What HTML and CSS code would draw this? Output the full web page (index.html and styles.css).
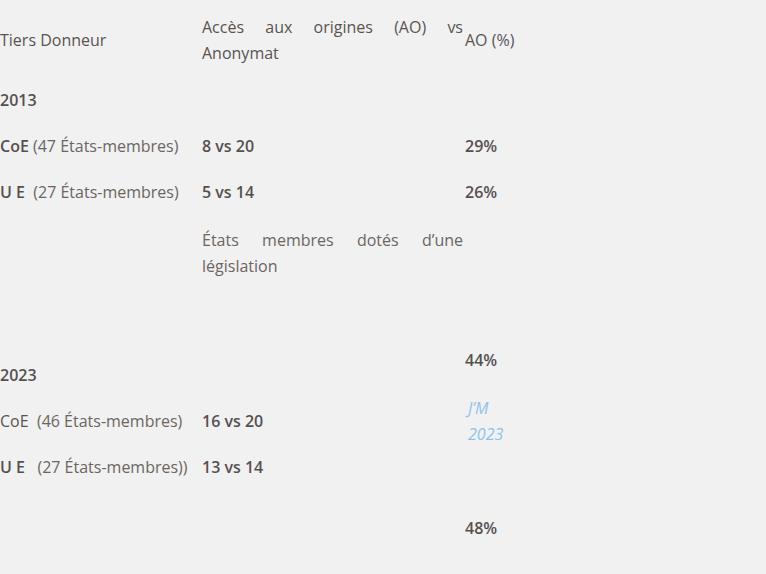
FILE: index.html
```html
<!DOCTYPE html>
<html lang="fr">
<head>
<meta charset="utf-8">
<link rel="stylesheet" href="styles.css">
</head>
<body>
<div class="table">
  <div class="row r-head">
    <div class="cell">Tiers Donneur</div>
    <div class="cell just">Accès aux origines (AO) vs Anonymat</div>
    <div class="cell">AO (%)</div>
  </div>
  <div class="row r-2013">
    <div class="cell strong">2013</div>
    <div class="cell"></div>
    <div class="cell"></div>
  </div>
  <div class="row r-coe">
    <div class="cell"><span class="strong">CoE</span> <span class="light">(47 États-membres)</span></div>
    <div class="cell strong">8 vs 20</div>
    <div class="cell strong">29%</div>
  </div>
  <div class="row r-ue">
    <div class="cell"><span class="strong">U E</span>&nbsp; <span class="light">(27 États-membres)</span></div>
    <div class="cell strong">5 vs 14</div>
    <div class="cell strong">26%</div>
  </div>
  <div class="row r-leg">
    <div class="cell"></div>
    <div class="cell just light">États membres dotés d’une législation</div>
    <div class="cell"></div>
  </div>
  <div class="row r-2023">
    <div class="cell strong y2023">2023</div>
    <div class="cell"></div>
    <div class="cell strong p44">44%</div>
  </div>
  <div class="row r-coe2">
    <div class="cell">CoE&nbsp; <span class="light">(46 États-membres)</span></div>
    <div class="cell strong">16 vs 20</div>
    <div class="cell note">J’M<br>2023</div>
  </div>
  <div class="row r-ue2">
    <div class="cell"><span class="strong">U E</span>&nbsp;&nbsp; <span class="light">(27 États-membres))</span></div>
    <div class="cell strong">13 vs 14</div>
    <div class="cell"></div>
  </div>
  <div class="row r-last">
    <div class="cell"></div>
    <div class="cell"></div>
    <div class="cell strong">48%</div>
  </div>
</div>
</body>
</html>
```

FILE: styles.css
```css
html, body {
  margin: 0;
  padding: 0;
  background: #f1f1f1;
}
body {
  font-family: "Open Sans", "Lato", sans-serif;
  font-size: 16px;
  line-height: 26px;
  color: #5a5350;
}
.table {
  padding-top: 4px;
  width: 766px;
}
.row {
  display: grid;
  grid-template-columns: 202px 263px 1fr;
  align-items: center;
}
.just {
  text-align: justify;
  padding-right: 2px;
}
.strong {
  font-weight: 600;
  color: #555050;
}
.light {
  color: #6b6562;
}
.r-head { height: 72px; }
.r-2013 { height: 48px; }
.r-coe { height: 44px; }
.r-ue { height: 48px; }
.r-leg { height: 74px; }
.r-2023 { height: 108px; }
.r-2023 .y2023 { align-self: end; margin-bottom: 10px; }
.r-2023 .p44 { align-self: end; margin-bottom: 25px; }
.r-coe2 { height: 46px; }
.note {
  margin: -3px 0 -3px 3px;
  font-style: italic;
  color: #8fc3ea;
}
.r-ue2 { height: 46px; }
.r-last { height: 76px; }
```
